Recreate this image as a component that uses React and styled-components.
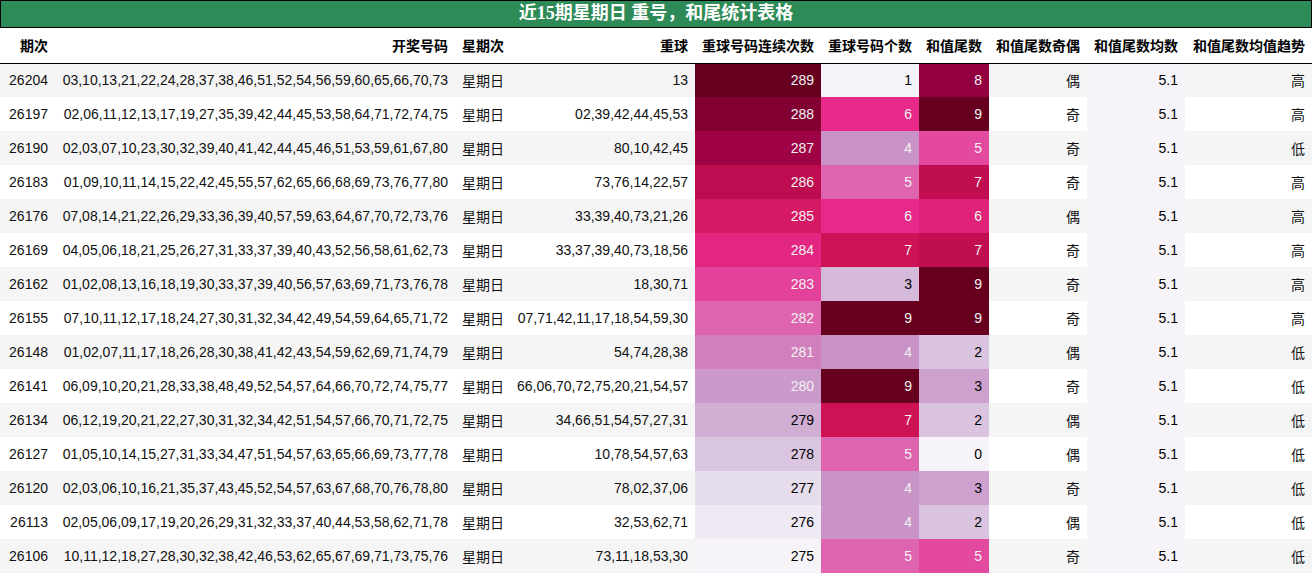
import React from 'react';
import styled, { createGlobalStyle } from 'styled-components';

const GlobalStyle = createGlobalStyle`
  html, body {
    margin: 0;
    padding: 0;
    background: #fff;
  }
  body {
    font-family: "Liberation Sans", "Noto Sans CJK SC", sans-serif;
    color: #111;
  }
`;

// matplotlib PuRd stops
const PURD = [
  [247, 244, 249],
  [231, 225, 239],
  [212, 185, 218],
  [201, 148, 199],
  [223, 101, 176],
  [231, 41, 138],
  [206, 18, 86],
  [152, 0, 67],
  [103, 0, 31],
];

const purd = (v) => {
  const idx = Math.min(255, Math.max(0, Math.floor(v * 256)));
  const x = (idx / 255) * (PURD.length - 1);
  const i = Math.min(PURD.length - 2, Math.floor(x));
  const t = x - i;
  return PURD[i].map((c, k) => Math.round(c + (PURD[i + 1][k] - c) * t));
};

const luminance = (rgb) => {
  const [r, g, b] = rgb.map((c) => {
    const s = c / 255;
    return s <= 0.03928 ? s / 12.92 : Math.pow((s + 0.055) / 1.055, 2.4);
  });
  return 0.2126 * r + 0.7152 * g + 0.0722 * b;
};

const gradient = (values) => {
  const min = Math.min(...values);
  const max = Math.max(...values);
  return values.map((v) => {
    const rgb = purd(max === min ? 0 : (v - min) / (max - min));
    return {
      bg: `rgb(${rgb.join(',')})`,
      fg: luminance(rgb) < 0.408 ? '#f1f1f1' : '#000000',
    };
  });
};

const rows = [
  ['26204', '03,10,13,21,22,24,28,37,38,46,51,52,54,56,59,60,65,66,70,73', '13', 289, 1, 8, '偶', '高'],
  ['26197', '02,06,11,12,13,17,19,27,35,39,42,44,45,53,58,64,71,72,74,75', '02,39,42,44,45,53', 288, 6, 9, '奇', '高'],
  ['26190', '02,03,07,10,23,30,32,39,40,41,42,44,45,46,51,53,59,61,67,80', '80,10,42,45', 287, 4, 5, '奇', '低'],
  ['26183', '01,09,10,11,14,15,22,42,45,55,57,62,65,66,68,69,73,76,77,80', '73,76,14,22,57', 286, 5, 7, '奇', '高'],
  ['26176', '07,08,14,21,22,26,29,33,36,39,40,57,59,63,64,67,70,72,73,76', '33,39,40,73,21,26', 285, 6, 6, '偶', '高'],
  ['26169', '04,05,06,18,21,25,26,27,31,33,37,39,40,43,52,56,58,61,62,73', '33,37,39,40,73,18,56', 284, 7, 7, '奇', '高'],
  ['26162', '01,02,08,13,16,18,19,30,33,37,39,40,56,57,63,69,71,73,76,78', '18,30,71', 283, 3, 9, '奇', '高'],
  ['26155', '07,10,11,12,17,18,24,27,30,31,32,34,42,49,54,59,64,65,71,72', '07,71,42,11,17,18,54,59,30', 282, 9, 9, '奇', '高'],
  ['26148', '01,02,07,11,17,18,26,28,30,38,41,42,43,54,59,62,69,71,74,79', '54,74,28,38', 281, 4, 2, '偶', '低'],
  ['26141', '06,09,10,20,21,28,33,38,48,49,52,54,57,64,66,70,72,74,75,77', '66,06,70,72,75,20,21,54,57', 280, 9, 3, '奇', '低'],
  ['26134', '06,12,19,20,21,22,27,30,31,32,34,42,51,54,57,66,70,71,72,75', '34,66,51,54,57,27,31', 279, 7, 2, '偶', '低'],
  ['26127', '01,05,10,14,15,27,31,33,34,47,51,54,57,63,65,66,69,73,77,78', '10,78,54,57,63', 278, 5, 0, '偶', '低'],
  ['26120', '02,03,06,10,16,21,35,37,43,45,52,54,57,63,67,68,70,76,78,80', '78,02,37,06', 277, 4, 3, '奇', '低'],
  ['26113', '02,05,06,09,17,19,20,26,29,31,32,33,37,40,44,53,58,62,71,78', '32,53,62,71', 276, 4, 2, '偶', '低'],
  ['26106', '10,11,12,18,27,28,30,32,38,42,46,53,62,65,67,69,71,73,75,76', '73,11,18,53,30', 275, 5, 5, '奇', '低'],
];

const columns = [
  { label: '期次', width: 55 },
  { label: '开奖号码', width: 400 },
  { label: '星期次', width: 55, align: 'left' },
  { label: '重球', width: 185 },
  { label: '重球号码连续次数', width: 126 },
  { label: '重球号码个数', width: 98 },
  { label: '和值尾数', width: 70 },
  { label: '和值尾数奇偶', width: 98 },
  { label: '和值尾数均数', width: 98 },
  { label: '和值尾数均值趋势', width: 127 },
];

const streakColors = gradient(rows.map((r) => r[3]));
const countColors = gradient(rows.map((r) => r[4]));
const tailColors = gradient(rows.map((r) => r[5]));
const meanColors = gradient(rows.map(() => 5.1));

const Page = styled.div`
  width: 1312px;
`;

const Title = styled.div`
  box-sizing: border-box;
  height: 28px;
  border: 1px solid #000;
  background: #2e8b57;
  color: #fff;
  font-family: "Liberation Serif", "Noto Sans CJK SC", serif;
  font-weight: bold;
  font-size: 18px;
  line-height: 25px;
  text-align: center;
`;

const Table = styled.table`
  width: 1312px;
  table-layout: fixed;
  border-collapse: collapse;
  border-spacing: 0;
  font-size: 14px;
`;

const Col = styled.col`
  width: ${(p) => p.$w}px;
`;

const HeadCell = styled.th`
  height: 35px;
  padding: 0 7px;
  box-sizing: border-box;
  font-weight: bold;
  text-align: ${(p) => p.$align || 'right'};
  white-space: nowrap;
  border-bottom: 1px solid #000;
  color: #000;
`;

const Row = styled.tr`
  background: ${(p) => (p.$odd ? '#f5f5f5' : '#ffffff')};
`;

const Cell = styled.td`
  height: 34px;
  padding: 0 7px;
  box-sizing: border-box;
  text-align: ${(p) => p.$align || 'right'};
  white-space: nowrap;
  overflow: hidden;
  background: ${(p) => p.$bg || 'transparent'};
  color: ${(p) => p.$fg || '#111'};
`;

export default function App() {
  return (
    <Page>
      <GlobalStyle />
      <Title>近15期星期日 重号，和尾统计表格</Title>
      <Table>
        <colgroup>
          {columns.map((c) => (
            <Col key={c.label} $w={c.width} />
          ))}
        </colgroup>
        <thead>
          <tr>
            {columns.map((c) => (
              <HeadCell key={c.label} $align={c.align}>
                {c.label}
              </HeadCell>
            ))}
          </tr>
        </thead>
        <tbody>
          {rows.map((r, i) => (
            <Row key={r[0]} $odd={i % 2 === 0}>
              <Cell>{r[0]}</Cell>
              <Cell>{r[1]}</Cell>
              <Cell $align="left">星期日</Cell>
              <Cell>{r[2]}</Cell>
              <Cell $bg={streakColors[i].bg} $fg={streakColors[i].fg}>{r[3]}</Cell>
              <Cell $bg={countColors[i].bg} $fg={countColors[i].fg}>{r[4]}</Cell>
              <Cell $bg={tailColors[i].bg} $fg={tailColors[i].fg}>{r[5]}</Cell>
              <Cell>{r[6]}</Cell>
              <Cell $bg={meanColors[i].bg} $fg={meanColors[i].fg}>5.1</Cell>
              <Cell>{r[7]}</Cell>
            </Row>
          ))}
        </tbody>
      </Table>
    </Page>
  );
}
